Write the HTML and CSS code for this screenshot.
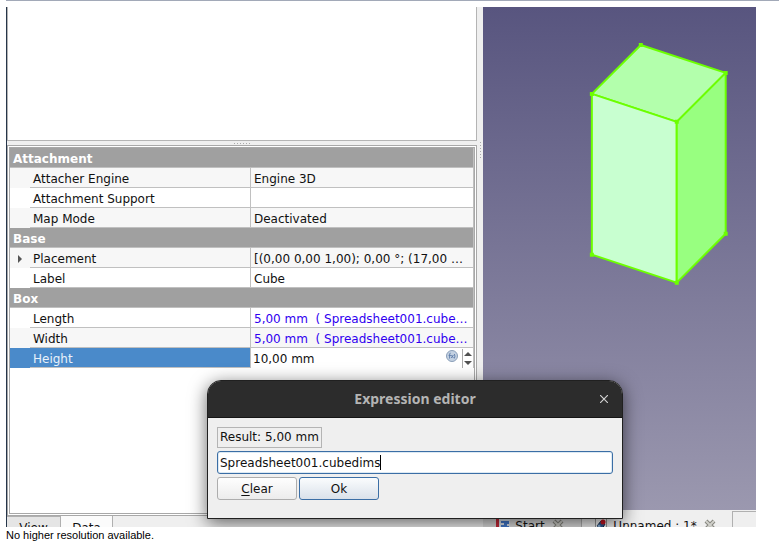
FILE: index.html
```
<!DOCTYPE html>
<html lang="en">
<head>
<meta charset="utf-8">
<title>Expression editor</title>
<link rel="stylesheet" href="styles.css">
</head>
<body>
<figure class="figure">
  <div class="workspace">
    <section class="dock">
      <div class="tree"></div>
      <div class="splitter"><span class="grip"></span></div>
      <div class="properties">
        <table class="props">
          <colgroup><col class="col-indent"><col class="col-name"><col></colgroup>
          <tbody>
            <tr class="group"><th colspan="3">Attachment</th></tr>
            <tr class="alt"><td class="indent"></td><th>Attacher Engine</th><td>Engine 3D</td></tr>
            <tr><td class="indent"></td><th>Attachment Support</th><td></td></tr>
            <tr class="alt"><td class="indent"></td><th>Map Mode</th><td>Deactivated</td></tr>
            <tr class="group"><th colspan="3">Base</th></tr>
            <tr class="alt"><td class="indent"><svg class="expander" viewBox="0 0 4 8"><path d="M0 0L4 4L0 8Z" fill="#555"/></svg></td><th>Placement</th><td>[(0,00 0,00 1,00); 0,00 °; (17,00 …</td></tr>
            <tr><td class="indent"></td><th>Label</th><td>Cube</td></tr>
            <tr class="group"><th colspan="3">Box</th></tr>
            <tr><td class="indent"></td><th>Length</th><td class="bound">5,00 mm&nbsp; ( Spreadsheet001.cube…</td></tr>
            <tr class="alt"><td class="indent"></td><th>Width</th><td class="bound">5,00 mm&nbsp; ( Spreadsheet001.cube…</td></tr>
            <tr class="selected"><td class="indent"></td><th><label for="height">Height</label></th>
              <td class="edit-cell">
                <div class="editor">
                  <input id="height" class="value" type="text" value="10,00 mm">
                  <button class="fx" type="button" aria-label="Edit expression">
                    <svg viewBox="0 0 12 12"><circle cx="6" cy="6" r="5.5" fill="#c3d1e2" stroke="#8b9fb8"/><path d="M4.6 3.2Q3.6 3 3.6 4.2V8.6M2.6 5.4H5M5.4 5L7.4 8M7.4 5L5.2 8M8.3 4Q9.6 6 8.3 8.5" fill="none" stroke="#5b7ba8" stroke-width=".9"/></svg>
                  </button>
                  <div class="spin">
                    <button type="button" aria-label="Increase"><svg viewBox="0 0 8 4"><path d="M0 4L4 0L8 4Z" fill="#505050"/></svg></button>
                    <button type="button" aria-label="Decrease"><svg viewBox="0 0 8 4"><path d="M0 0L4 4L8 0Z" fill="#505050"/></svg></button>
                  </div>
                </div>
              </td></tr>
          </tbody>
        </table>
      </div>
      <nav class="dock-tabs">
        <button type="button" class="dock-tab view">View</button>
        <button type="button" class="dock-tab data">Data</button>
      </nav>
    </section>
    <div class="side-splitter"><span class="grip tall"></span></div>
    <section class="main">
      <div class="viewport">
        <svg class="scene" viewBox="0 0 273 503" preserveAspectRatio="xMidYMin meet">
          <g stroke="#6cff00" stroke-width="2" stroke-linejoin="round">
            <path d="M109 87L158 38L243 66L194 115Z" fill="#b3ffac"/>
            <path d="M109 87L194 115V276L109 248Z" fill="#c8ffd0"/>
            <path d="M194 115L243 66V227L194 276Z" fill="#98ff80"/>
          </g>
          <path d="M107 85h4v4h-4zM156 36h4v4h-4zM241 64h4v4h-4zM192 113h4v4h-4zM107 246h4v4h-4zM192 274h4v4h-4zM241 225h4v4h-4z" fill="#6cff00"/>
        </svg>
      </div>
      <nav class="doc-tabs">
        <button type="button" class="doc-tab start">
          <svg class="doc-icon" viewBox="0 0 14 14"><path d="M0 0H3V14H0Z" fill="#c92a3a"/><path d="M3 0H14V14H3Z" fill="#dfe6ef"/><path d="M5 3H13V6H11V8H13V14H5V11H8V9H5V7H8V5H5Z" fill="#447bd0"/></svg>
          <span>Start</span>
          <svg class="close-icon" viewBox="0 0 12 12"><path d="M2 2L10 10M10 2L2 10" stroke="#85857e" stroke-width="4"/><path d="M2 2L10 10M10 2L2 10" stroke="#d0d0ca" stroke-width="2"/></svg>
        </button>
        <button type="button" class="doc-tab unnamed">
          <svg class="doc-icon" viewBox="0 0 14 14"><path d="M1.5 .5H12.5V14H1.5Z" fill="#f5f5f5" stroke="#999"/><path d="M3 8L7 3L11 6L8 11Z" fill="#29568f" stroke="#172c4a"/><circle cx="9" cy="4" r="2.5" fill="#c91420"/><circle cx="5" cy="8" r="1.5" fill="#83a9d2"/></svg>
          <span>Unnamed : 1*</span>
          <svg class="close-icon" viewBox="0 0 12 12"><path d="M2 2L10 10M10 2L2 10" stroke="#85857e" stroke-width="4"/><path d="M2 2L10 10M10 2L2 10" stroke="#d0d0ca" stroke-width="2"/></svg>
        </button>
        <span class="tab-filler"></span>
      </nav>
    </section>
    <div class="dialog" role="dialog" aria-labelledby="dialog-title">
      <header class="title-bar">
        <h1 id="dialog-title">Expression editor</h1>
        <button type="button" class="close" aria-label="Close"><svg viewBox="0 0 8 8"><path d="M0 0L8 8M8 0L0 8" stroke="#d0d0d0" stroke-width="1.2"/></svg></button>
      </header>
      <form class="dialog-body">
        <output class="result" for="expression">Result: 5,00 mm</output>
        <div class="expression">
          <input id="expression" type="text" value="Spreadsheet001.cubedims" aria-label="Expression">
          <span class="caret"></span>
        </div>
        <div class="actions">
          <button type="button" class="btn"><u>C</u>lear</button>
          <button type="button" class="btn primary">Ok</button>
        </div>
      </form>
    </div>
  </div>
  <figcaption>No higher resolution available.</figcaption>
</figure>
</body>
</html>
```
FILE: styles.css
```
* { box-sizing: border-box; }
body {
  margin: 0;
  background: #fff;
  font: 12px/16px "DejaVu Sans", sans-serif;
  color: #111;
}
button, input { font: inherit; color: inherit; margin: 0; padding: 0; border: 0; background: none; }
svg { display: block; }

.figure {
  display: flex;
  flex-direction: column;
  height: 100vh;
  min-height: 500px;
  margin: 0 0 0 6px;
  border-top: 1px solid #a2a9b8;
}
.workspace {
  position: relative;
  display: flex;
  flex: 1;
  min-height: 0;
  margin: 6px 23px 0 0;
  overflow: hidden;
  background: #efefef;
}
figcaption {
  height: 17px;
  font: 11px/17px "Liberation Sans", sans-serif;
  color: #000;
}

/* Left dock */
.dock {
  display: flex;
  flex-direction: column;
  flex: 471 1 0;
  min-width: 0;
  border-left: 1px solid #26364a;
}
.tree { height: 134px; background: #fff; border: 1px solid #b4b4b4; border-top: 0; }
.splitter { display: flex; align-items: center; justify-content: center; height: 4px; }
.grip { width: 17px; height: 1px; background: repeating-linear-gradient(90deg, #aaa 0 1px, transparent 1px 3px); }
.grip.tall { display: block; width: 1px; height: 17px; background: repeating-linear-gradient(#aaa 0 1px, transparent 1px 3px); }
.properties {
  flex: 1;
  min-height: 0;
  overflow: hidden;
  background: #fff;
  border: 3px double #a8a8a8;
}
.props { width: 100%; table-layout: fixed; border-collapse: separate; border-spacing: 0; border-right: 1px solid #c0c0c0; }
.col-indent { width: 20px; }
.col-name { width: 221px; }
.props tr { height: 20px; }
.props th, .props td {
  height: 20px;
  padding: 3px 3px 0;
  overflow: hidden;
  border-bottom: 1px solid #c0c0c0;
  font-weight: normal;
  line-height: 16px;
  text-align: left;
  white-space: nowrap;
}
.props th + td { padding-right: 0; }
.props th { border-right: 1px solid #c0c0c0; }
.props .alt > * { background: #f7f7f7; }
.props .group th { border-right: 0; background: #a0a0a0; color: #fff; font-weight: bold; }
.props .indent { border-bottom-color: transparent; }
.props .bound { color: #3000f0; }
.props .selected th, .props .selected .indent { background: #4a8aca; color: #e8f1fa; }
.expander { width: 4px; height: 8px; margin-left: 5px; }
.props .edit-cell { padding: 0; border: 0; }
.editor { display: flex; align-items: center; height: 20px; padding: 1px 0 0 2px; background: #fff; }
.value { flex: 1; min-width: 0; }
.fx { width: 12px; height: 12px; margin: 0 4px 6px 0; }
.spin { display: flex; flex-direction: column; justify-content: center; gap: 5px; height: 19px; padding: 0 1px; border-left: 1px solid #aaa; }
.spin button { width: 8px; height: 4px; }

.dock-tabs { display: flex; height: 11px; overflow: hidden; }
.dock-tab { height: 22px; border-right: 1px solid #b0b0b0; line-height: 16px; }
.dock-tab.view { width: 54px; border-top: 1px solid #b0b0b0; background: #e5e5e5; }
.dock-tab.data { width: 52px; padding-top: 2px; background: #fbfbfb; }
.side-splitter { width: 6px; padding: 135px 0 0 3px; }

/* 3D view and document tabs */
.main { display: flex; flex-direction: column; flex: 273 1 0; min-width: 0; }
.viewport { flex: 1; min-height: 0; background: linear-gradient(#58557f, #9b98af); }
.scene { width: 100%; height: 100%; }
.doc-tabs { display: flex; height: 17px; overflow: hidden; }
.doc-tab { display: flex; align-items: flex-start; gap: 5px; height: 30px; padding-top: 8px; white-space: nowrap; }
.doc-tab.start { width: 99px; padding-left: 13px; background: #dcdcdc; border-right: 1px solid #b0b0b0; }
.doc-tab.unnamed { width: 150px; padding-left: 12px; }
.doc-icon { width: 14px; height: 14px; }
.close-icon { width: 12px; height: 12px; margin: 1px 0 0 2px; }
.tab-filler { flex: 1; margin-top: 1px; border: 1px solid #b0b0b0; border-width: 1px 0 0 1px; }

/* Floating dialog */
.dialog {
  position: absolute;
  top: 373px;
  left: 201px;
  width: 416px;
  overflow: hidden;
  border: 1px solid #202020;
  border-radius: 14px 14px 0 0;
  background: #efefef;
  box-shadow: 0 4px 18px rgba(0, 0, 0, .6);
}
.title-bar {
  display: grid;
  grid-template-columns: 1fr auto 1fr;
  align-items: center;
  height: 37px;
  border-bottom: 1px solid #151515;
  background: #2c2c2c;
}
.title-bar h1 { grid-column: 2; margin: 0; font: bold 14px/20px "Noto Sans", sans-serif; color: #b4b4b4; }
.close { justify-self: end; width: 8px; height: 8px; margin-right: 14px; }
.dialog-body { display: flex; flex-direction: column; align-items: flex-start; gap: 3px; padding: 9px 9px 18px; }
.result { padding: 2px; border: 1px solid #b4b4b4; line-height: 15px; }
.expression {
  display: flex;
  align-items: center;
  width: 100%;
  height: 23px;
  padding: 0 2px;
  border: 1px solid #3b6ea5;
  border-radius: 3px;
  background: #fff;
  box-shadow: inset 0 0 0 1px #dce9f3;
}
.expression input { field-sizing: content; outline: 0; }
.caret { width: 1px; height: 15px; background: #000; }
.actions { display: flex; gap: 2px; }
.btn { width: 80px; height: 23px; border: 1px solid #adadad; border-radius: 3px; background: linear-gradient(#fefefe, #ececec); }
.btn u { text-underline-offset: 2px; }
.btn.primary { border-color: #3b6ea5; background: linear-gradient(#fafcfd, #dae1ea); }
```
